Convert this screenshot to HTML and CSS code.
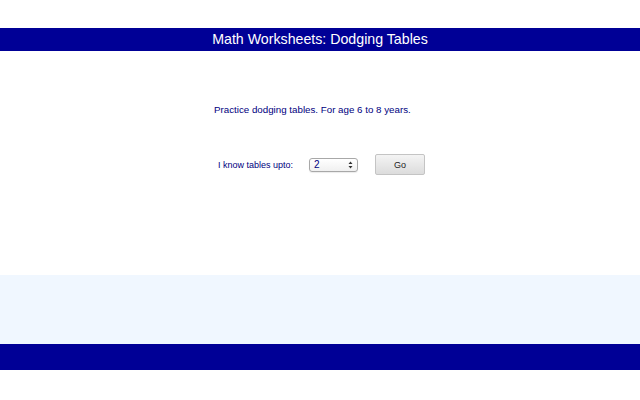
FILE: index.html
```html
<!DOCTYPE html>
<html lang="en">
<head>
  <meta charset="UTF-8" />
  <title>Math Worksheets: Dodging Tables</title>
  <link rel="stylesheet" href="styles.css">
</head>
<body>
  <div class="topbar">Math Worksheets: Dodging Tables</div>
  <div class="content">
    <div class="box">
      <p class="intro">Practice dodging tables. For age 6 to 8 years.</p>
      <form class="pick">
        <label class="pick-label">I know tables upto:</label>
        <span class="select">
          <span class="select-val">2</span>
          <svg class="select-arrows" width="5" height="8" viewBox="0 0 5 8">
            <path d="M2.5 0.5 L4.5 3 L0.5 3 Z M0.5 5 L4.5 5 L2.5 7.5 Z" fill="#333"/>
          </svg>
        </span>
        <button type="button" class="go">Go</button>
      </form>
    </div>
  </div>
  <div class="band"></div>
  <div class="bottombar"></div>
</body>
</html>
```
FILE: styles.css
```css
* { margin: 0; padding: 0; box-sizing: border-box; }
html, body {
  width: 100%; height: 100%; overflow: hidden;
  background: #fff; font-family: 'Liberation Sans', Arial, sans-serif;
}
.topbar {
  margin-top: 28px; height: 23px; line-height: 23px;
  background: #000096; color: #fff; font-size: 14.2px; text-align: center;
}
.content { height: 224px; padding-top: 53px; }
.box { width: 212px; margin: 0 auto; }
.intro { color: #000080; font-size: 9.75px; line-height: 12px; }

.pick {
  display: flex; align-items: center;
  margin-top: 38px; padding-left: 4px;
}
.pick-label { color: #000080; font-size: 9px; width: 91px; }
.select {
  display: flex; align-items: center; justify-content: space-between;
  width: 49px; height: 14px; padding: 0 4px;
  border: 1px solid #a8a8a8; border-radius: 3px;
  background: linear-gradient(#fff, #f0f0f0);
  box-shadow: 0 1px 1px rgba(0,0,0,0.08);
}
.select-val { color: #000080; font-size: 10px; }
.select-arrows { display: block; }
.go {
  margin-left: 17px; width: 50px; height: 21px;
  border: 1px solid #c4c4c4; border-radius: 2px;
  background: linear-gradient(#f4f4f4, #dcdcdc);
  color: #222; font-family: inherit; font-size: 9px;
}

.band { height: 69px; background: #f0f7ff; }
.bottombar { height: 26px; background: #000096; }
```
